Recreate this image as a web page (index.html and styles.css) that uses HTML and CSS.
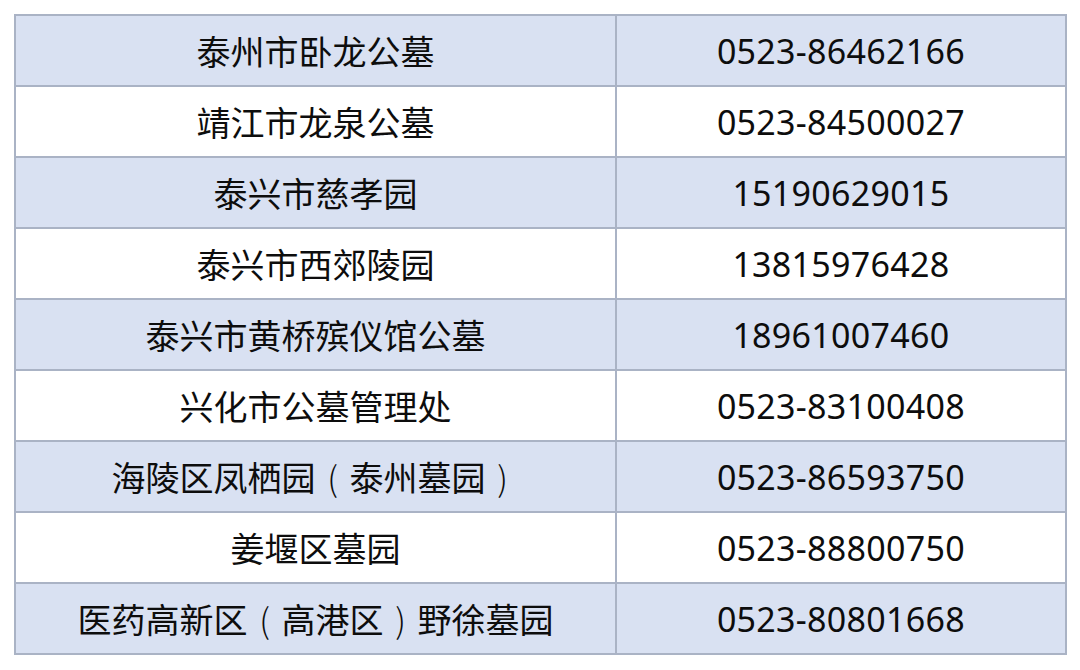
FILE: index.html
```html
<!DOCTYPE html>
<html lang="zh">
<head>
<meta charset="utf-8">
<link rel="stylesheet" href="styles.css">
</head>
<body>
<table class="list">
<tr class="band"><td>泰州市卧龙公墓</td><td>0523-86462166</td></tr>
<tr><td>靖江市龙泉公墓</td><td>0523-84500027</td></tr>
<tr class="band"><td>泰兴市慈孝园</td><td>15190629015</td></tr>
<tr><td>泰兴市西郊陵园</td><td>13815976428</td></tr>
<tr class="band"><td>泰兴市黄桥殡仪馆公墓</td><td>18961007460</td></tr>
<tr><td>兴化市公墓管理处</td><td>0523-83100408</td></tr>
<tr class="band"><td>海陵区凤栖园<span class="p">(</span>泰州墓园<span class="p">)</span></td><td>0523-86593750</td></tr>
<tr><td>姜堰区墓园</td><td>0523-88800750</td></tr>
<tr class="band"><td>医药高新区<span class="p">(</span>高港区<span class="p">)</span>野徐墓园</td><td>0523-80801668</td></tr>
</table>
</body>
</html>
```
FILE: styles.css
```css
html, body {
  margin: 0;
  padding: 0;
  background: #ffffff;
}
body {
  padding: 14px 0 0 14px;
  font-family: "Noto Sans CJK SC", "Noto Sans", sans-serif;
}
.list {
  border-collapse: collapse;
  width: 1053px;
  table-layout: fixed;
}
.list td {
  border: 2px solid #aab3c5;
  height: 69px;
  padding: 0;
  text-align: center;
  vertical-align: middle;
  font-size: 34px;
  line-height: 1;
  color: #0d0d0d;
}
.list td:first-child {
  width: 599px;
}
.list td:last-child {
  font-family: "Noto Sans", sans-serif;
  font-size: 34px;
  letter-spacing: 0.3px;
}
.p {
  display: inline-block;
  width: 1em;
  text-align: center;
  font-weight: 300;
}
.band td {
  background: #d9e1f2;
}
```
